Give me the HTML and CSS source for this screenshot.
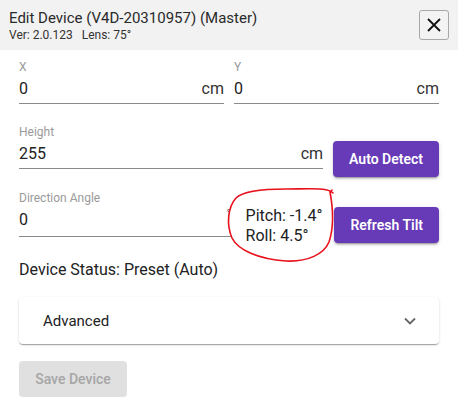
FILE: index.html
```html
<!DOCTYPE html>
<html>
<head>
<meta charset="utf-8">
<link rel="stylesheet" href="styles.css">
</head>
<body>
<div class="dialog">
  <header class="head">
    <div class="titles">
      <div class="title">Edit Device (V4D-20310957) (Master)</div>
      <div class="sub">Ver: 2.0.123&nbsp;&nbsp;&nbsp;Lens: 75°</div>
    </div>
    <button class="close" aria-label="close">
      <svg width="16" height="16" viewBox="0 0 16 16"><path d="M2 2 L14 14 M14 2 L2 14" stroke="#111" stroke-width="1.8" fill="none"/></svg>
    </button>
  </header>
  <main class="body">
    <div class="row row-xy">
      <div class="field">
        <label class="lbl">X</label>
        <div class="inp"><span class="val">0</span><span class="unit">cm</span></div>
      </div>
      <div class="field">
        <label class="lbl">Y</label>
        <div class="inp"><span class="val">0</span><span class="unit">cm</span></div>
      </div>
    </div>
    <div class="row row-h">
      <div class="field grow">
        <label class="lbl">Height</label>
        <div class="inp"><span class="val">255</span><span class="unit">cm</span></div>
      </div>
      <button class="btn">Auto Detect</button>
    </div>
    <div class="row row-d">
      <div class="field grow">
        <label class="lbl">Direction Angle</label>
        <div class="inp tall"><span class="val">0</span><span class="deg">°</span></div>
      </div>
      <div class="tilt">
        <div>Pitch: -1.4°</div>
        <div>Roll: 4.5°</div>
      </div>
      <button class="btn btn-tilt">Refresh Tilt</button>
    </div>
    <div class="status">Device Status: Preset (Auto)</div>
    <div class="card">
      <span>Advanced</span>
      <svg width="14" height="10" viewBox="0 0 14 10"><path d="M2 2.5 L7 7.5 L12 2.5" stroke="#666" stroke-width="1.8" fill="none"/></svg>
    </div>
    <button class="save" disabled>Save Device</button>
  </main>
  <svg class="scribble" width="122" height="84" viewBox="0 0 122 84">
    <path d="M117 13 C112 7 90 9 70 9 C50 9 28 10 20 18 C12 27 10 44 16 58 C22 70 42 79 70 81 C92 82 108 74 113 62 C118 47 117 28 114 12 L116 10"
      stroke="#e8101a" stroke-width="1.6" fill="none" stroke-linecap="round"/>
  </svg>
</div>
</body>
</html>
```
FILE: styles.css
```css
* { box-sizing: border-box; }
html, body { margin: 0; padding: 0; background: #fff; }
body { font-family: Roboto, "Noto Sans", sans-serif; color: #222; }
.dialog { position: relative; width: 458px; height: 417px; overflow: hidden; }
.head {
  height: 50px; background: #f2f2f2;
  display: flex; align-items: flex-start; justify-content: space-between;
  padding: 8px 9px 0 9px;
}
.title { font-size: 15px; line-height: 20px; color: #2a2a2a; }
.sub { font-size: 12px; line-height: 15px; color: #333; }
.close {
  width: 30px; height: 30px; margin-top: 2px; padding: 0;
  border: 1px solid #a8a8a8; border-radius: 3px; background: #f3f3f3;
  display: flex; align-items: center; justify-content: center;
}
.body { padding: 9px 19px 0 19px; }
.row { display: flex; align-items: flex-start; }
.row-xy { gap: 10px; }
.row-xy .field { flex: 1; }
.row-h { margin-top: 20px; gap: 10px; }
.row-d { margin-top: 13px; }
.grow { flex: 1; }
.lbl { display: block; font-size: 12px; line-height: 16px; color: #9a9a9a; }
.inp {
  height: 29px; display: flex; align-items: center; justify-content: space-between;
  border-bottom: 1px solid #8a8a8a; font-size: 16px; color: #222;
  padding-bottom: 2px;
}
.inp.tall { height: 31px; padding-bottom: 3px; }
.unit { color: #333; }
.deg { font-size: 10px; color: #444; align-self: center; margin-top: -12px; margin-right: 1px; }
.btn {
  margin-top: 17px; height: 36px; padding: 0 16px;
  background: #673ab7; color: #fff; border: 0; border-radius: 4px;
  font-family: Roboto, sans-serif; font-size: 14px; font-weight: 600;
  box-shadow: 0 3px 1px -2px rgba(0,0,0,.2), 0 2px 2px 0 rgba(0,0,0,.14), 0 1px 5px 0 rgba(0,0,0,.12);
}
.btn-tilt { margin-top: 17px; margin-left: 12px; }
.tilt { margin-left: 14px; margin-top: 16px; font-size: 16px; line-height: 20px; color: #222; }
.status { margin-top: 14px; font-size: 16px; line-height: 20px; color: #222; }
.card {
  margin-top: 17px; height: 47px; border-radius: 4px; background: #fff;
  box-shadow: 0 2px 1px -1px rgba(0,0,0,.2), 0 1px 1px 0 rgba(0,0,0,.14), 0 1px 3px 0 rgba(0,0,0,.12);
  display: flex; align-items: center; justify-content: space-between;
  padding: 0 22px 0 24px; font-size: 15px; color: #222;
}
.save {
  margin-top: 17px; height: 36px; width: 108px; padding: 0;
  background: #e0e0e0; color: #a6a6a6; border: 0; border-radius: 4px;
  font-family: Roboto, sans-serif; font-size: 14px; font-weight: 500;
}
.scribble { position: absolute; left: 216px; top: 180px; }
```
